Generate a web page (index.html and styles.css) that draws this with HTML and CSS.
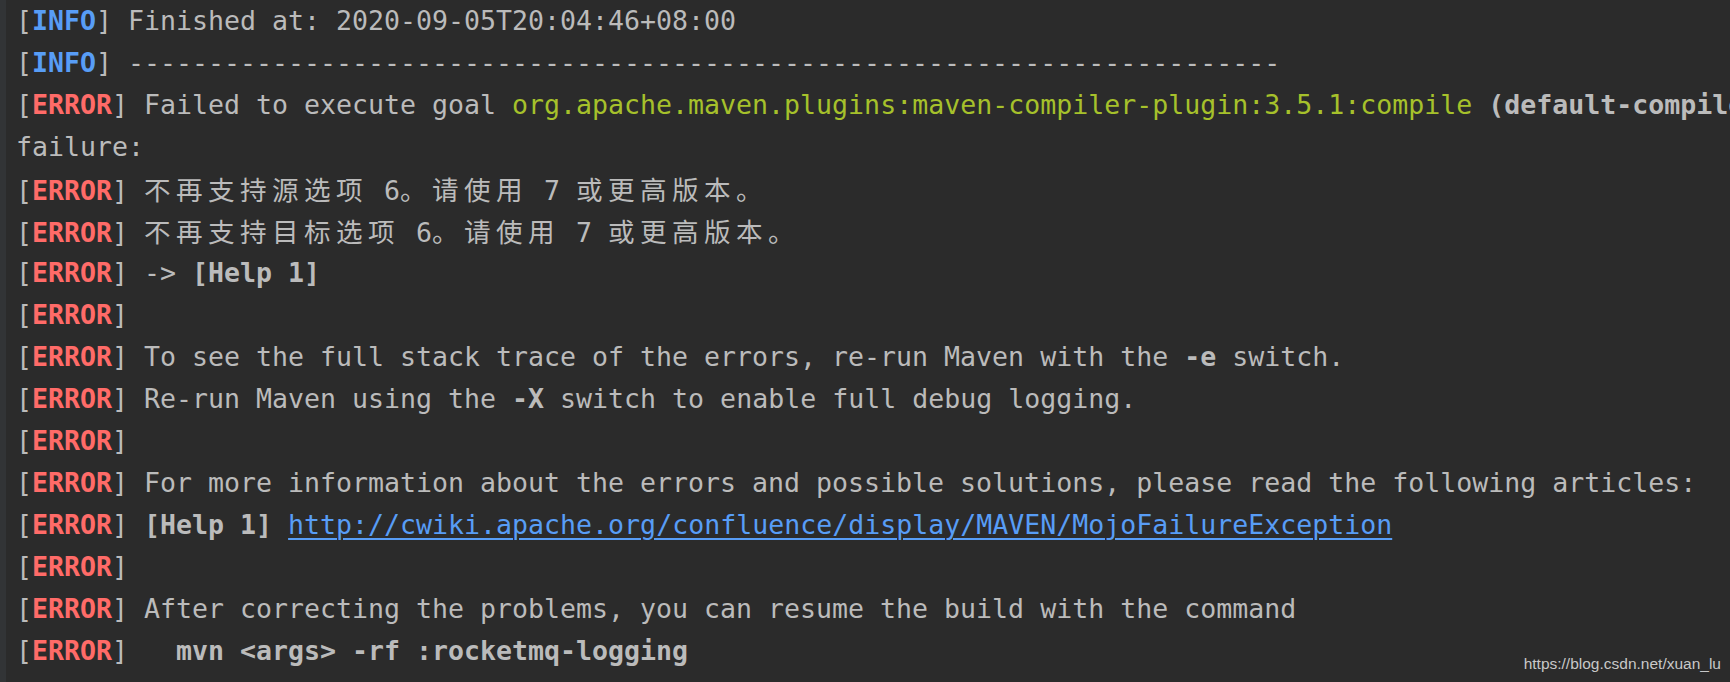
FILE: index.html
```html
<!DOCTYPE html>
<html lang="en">
<head>
<meta charset="utf-8">
<title>Maven build log</title>
<link rel="stylesheet" href="styles.css">
</head>
<body>
<div class="console">
  <div class="gutter"></div>
  <div class="log">
    <div class="line"><span class="br">[</span><span class="info">INFO</span><span class="br">]</span> Finished at: 2020-09-05T20:04:46+08:00</div>
    <div class="line"><span class="br">[</span><span class="info">INFO</span><span class="br">]</span> ------------------------------------------------------------------------</div>
    <div class="line"><span class="br">[</span><span class="error">ERROR</span><span class="br">]</span> Failed to execute goal <span class="goal">org.apache.maven.plugins:maven-compiler-plugin:3.5.1:compile</span> <b class="strong">(default-compile)</b> on project rocketmq-logging: Compilation failure: Compilation</div>
    <div class="line">failure:</div>
    <div class="line"><span class="br">[</span><span class="error">ERROR</span><span class="br">]</span> <span class="cjk">不再支持源选项</span> 6<span class="cjk">。请使用</span> 7 <span class="cjk">或更高版本。</span></div>
    <div class="line"><span class="br">[</span><span class="error">ERROR</span><span class="br">]</span> <span class="cjk">不再支持目标选项</span> 6<span class="cjk">。请使用</span> 7 <span class="cjk">或更高版本。</span></div>
    <div class="line"><span class="br">[</span><span class="error">ERROR</span><span class="br">]</span> -&gt; <b class="strong">[Help 1]</b></div>
    <div class="line"><span class="br">[</span><span class="error">ERROR</span><span class="br">]</span></div>
    <div class="line"><span class="br">[</span><span class="error">ERROR</span><span class="br">]</span> To see the full stack trace of the errors, re-run Maven with the <b class="strong">-e</b> switch.</div>
    <div class="line"><span class="br">[</span><span class="error">ERROR</span><span class="br">]</span> Re-run Maven using the <b class="strong">-X</b> switch to enable full debug logging.</div>
    <div class="line"><span class="br">[</span><span class="error">ERROR</span><span class="br">]</span></div>
    <div class="line"><span class="br">[</span><span class="error">ERROR</span><span class="br">]</span> For more information about the errors and possible solutions, please read the following articles:</div>
    <div class="line"><span class="br">[</span><span class="error">ERROR</span><span class="br">]</span> <b class="strong">[Help 1]</b> <a class="link" href="#">http://cwiki.apache.org/confluence/display/MAVEN/MojoFailureException</a></div>
    <div class="line"><span class="br">[</span><span class="error">ERROR</span><span class="br">]</span></div>
    <div class="line"><span class="br">[</span><span class="error">ERROR</span><span class="br">]</span> After correcting the problems, you can resume the build with the command</div>
    <div class="line"><span class="br">[</span><span class="error">ERROR</span><span class="br">]</span>   <b class="strong">mvn &lt;args&gt; -rf :rocketmq-logging</b></div>
  </div>
</div>
<div class="watermark">https://blog.csdn.net/xuan_lu</div>
</body>
</html>
```

FILE: styles.css
```css
html, body {
  margin: 0;
  padding: 0;
}

body {
  width: 1730px;
  height: 682px;
  overflow: hidden;
  background: #2b2b2b;
  position: relative;
}

.console {
  display: flex;
  height: 682px;
}

.gutter {
  width: 6px;
  flex: 0 0 6px;
  background: #323436;
}

.log {
  flex: 1;
  padding-left: 10px;
  overflow: hidden;
  font-family: "DejaVu Sans Mono", "Noto Sans CJK SC", monospace;
  font-size: 26.58px;
  color: #bbbbbb;
}

.line {
  height: 42px;
  line-height: 42px;
  white-space: pre;
  overflow: hidden;
}

.br {
  color: #bbbbbb;
}

.info {
  color: #589df6;
  font-weight: bold;
}

.error {
  color: #ff6b68;
  font-weight: bold;
}

.goal {
  color: #a6c12b;
}

.strong {
  font-weight: bold;
  color: #bbbbbb;
}

.cjk {
  font-family: "Noto Sans CJK SC", sans-serif;
  letter-spacing: 5.42px;
}

.link {
  color: #589df6;
  text-decoration: underline;
  text-decoration-thickness: 2px;
  text-underline-offset: 4px;
}

.watermark {
  position: absolute;
  right: 9px;
  bottom: 9px;
  font-family: "Liberation Sans", Arial, sans-serif;
  font-size: 15.5px;
  color: #c8c8c8;
}
```
